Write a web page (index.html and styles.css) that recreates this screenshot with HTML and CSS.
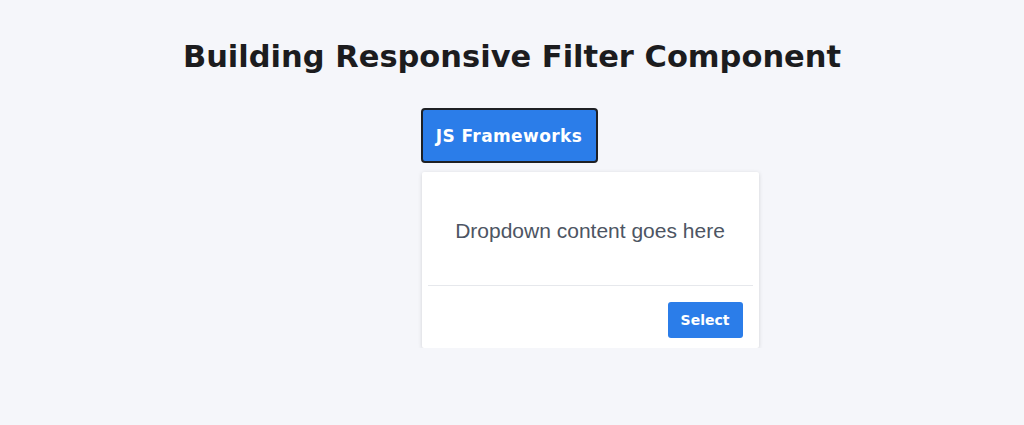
FILE: index.html
```html
<!DOCTYPE html>
<html>
<head>
<meta charset="utf-8">
<link rel="stylesheet" href="styles.css">
</head>
<body>
<main class="page">
  <h1 class="title">Building Responsive Filter Component</h1>
  <div class="filter">
    <button class="filter-toggle">JS Frameworks</button>
    <div class="panel">
      <div class="panel-body">Dropdown content goes here</div>
      <div class="panel-footer">
        <button class="select-btn">Select</button>
      </div>
    </div>
  </div>
</main>
</body>
</html>
```
FILE: styles.css
```css
html, body {
  margin: 0;
  padding: 0;
  background: #f5f6fa;
}
.page {
  display: flex;
  flex-direction: column;
  align-items: center;
  padding-top: 37px;
  font-family: "DejaVu Sans", sans-serif;
}
.title {
  margin: 0;
  font-size: 30.5px;
  font-weight: 700;
  color: #1c1c1e;
  line-height: 40px;
}
.filter {
  display: flex;
  flex-direction: column;
  align-items: flex-start;
  width: 178px;
  margin-top: 31px;
  margin-left: -5px;
}
.filter-toggle {
  width: 177px;
  height: 55px;
  background: #2b7de9;
  border: 2px solid #1e2024;
  border-radius: 4px;
  color: #ffffff;
  font-family: "DejaVu Sans", sans-serif;
  font-weight: 700;
  font-size: 17px;
  letter-spacing: 0.4px;
  padding: 0;
}
.panel {
  flex: none;
  width: 337px;
  margin-top: 9px;
  margin-left: 1px;
  background: #ffffff;
  box-shadow: 0 1px 4px rgba(0,0,0,0.15);
  border-radius: 2px;
}
.panel-body {
  height: 109px;
  padding-top: 4px;
  display: flex;
  align-items: center;
  justify-content: center;
  font-family: "Liberation Sans", Arial, sans-serif;
  font-size: 21px;
  color: #4d5563;
  margin: 0 6px;
  border-bottom: 1px solid #e6e8ec;
}
.panel-footer {
  display: flex;
  justify-content: flex-end;
  padding: 16px 16px 10px;
}
.select-btn {
  width: 75px;
  height: 36px;
  background: #2b7de9;
  border: none;
  border-radius: 3px;
  color: #ffffff;
  font-family: "DejaVu Sans", sans-serif;
  font-weight: 700;
  font-size: 14px;
  padding: 0;
}
```
